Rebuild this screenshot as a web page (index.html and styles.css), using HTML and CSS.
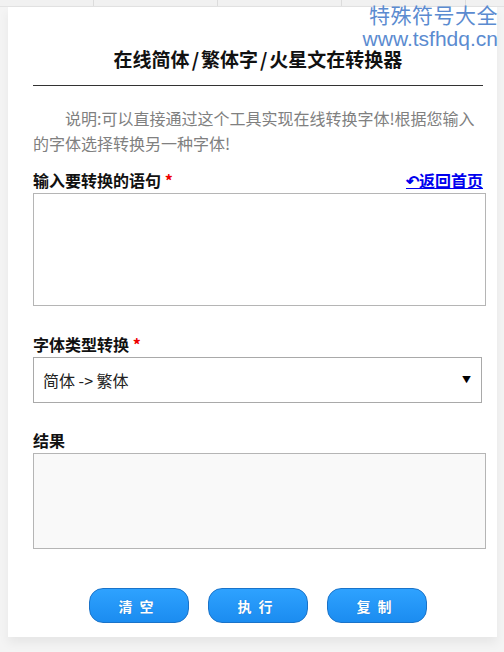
FILE: index.html
```html
<!DOCTYPE html>
<html lang="zh-CN">
<head>
<meta charset="UTF-8">
<meta name="viewport" content="width=device-width, initial-scale=1">
<title>在线简体/繁体字/火星文在转换器</title>
<link rel="stylesheet" href="styles.css">
</head>
<body>
<div class="top-tabs">
<span></span><span></span><span></span><span></span>
</div>
<div class="watermark">
<div class="wm-name">特殊符号大全</div>
<div class="wm-url">www.tsfhdq.cn</div>
</div>
<div class="card">
<h1 class="title">在线简体<i>/</i>繁体字<i>/</i>火星文在转换器</h1>
<hr class="rule">
<p class="intro">说明:可以直接通过这个工具实现在线转换字体!根据您输入的字体选择转换另一种字体!</p>

<div class="field-head">
<label for="source">输入要转换的语句 <em>*</em></label>
<a href="#" class="back-link">&#8630;返回首页</a>
</div>
<textarea id="source" class="box"></textarea>

<div class="field-head gap">
<label for="mode">字体类型转换 <em>*</em></label>
</div>
<div class="select-wrap">
<select id="mode">
<option>简体 -&gt; 繁体</option>
<option>繁体 -&gt; 简体</option>
<option>简体 -&gt; 火星文</option>
</select>
<span class="arrow">&#9660;</span>
</div>

<div class="field-head gap-sm">
<label for="result">结果</label>
</div>
<textarea id="result" class="box result" readonly></textarea>

<div class="actions">
<button class="btn">清空</button>
<button class="btn">执行</button>
<button class="btn">复制</button>
</div>
</div>
</body>
</html>
```

FILE: styles.css
```css
body {
  margin: 0;
  background: #f4f4f4;
  font-family: "Noto Sans CJK SC", "Liberation Sans", sans-serif;
  color: #111;
  height: 652px;
  overflow: hidden;
  position: relative;
}
.top-tabs {
  display: flex;
  height: 6px;
  border-bottom: 1px solid #e2e2e2;
  background: #f1f1f1;
}
.top-tabs span {
  width: 123px;
  border-right: 1px solid #dcdcdc;
}
.top-tabs span:first-child {
  width: 93px;
}
.watermark {
  position: absolute;
  top: 1px;
  right: 6px;
  color: #5b8bd0;
  text-align: right;
}
.wm-name {
  font-size: 21px;
  line-height: 26px;
  letter-spacing: 0.5px;
}
.wm-url {
  font-family: "Liberation Sans", sans-serif;
  font-size: 21px;
  line-height: 24px;
}
.card {
  background: #fff;
  margin: 0 7px 0 8px;
  padding: 40px 14px 14px 25px;
  box-shadow: 0 6px 10px rgba(0, 0, 0, 0.06);
}
.title {
  margin: 0;
  font-size: 19px;
  line-height: 24px;
  text-align: center;
  font-weight: bold;
}
.title i {
  font-style: normal;
  padding: 0 2px;
}
.rule {
  margin: 14px 0 0;
  border: 0;
  border-top: 1px solid #333;
}
.intro {
  margin: 20px 0 0;
  font-size: 16px;
  line-height: 25px;
  color: #808080;
  text-indent: 2em;
}
.field-head {
  display: flex;
  justify-content: space-between;
  align-items: center;
  margin-top: 12px;
  height: 24px;
  margin-bottom: 1px;
}
.field-head.gap {
  margin-top: 26px;
}
.field-head.gap-sm {
  margin-top: 25px;
}
.field-head label {
  font-size: 16px;
  font-weight: bold;
}
.field-head em {
  color: #e00;
  font-style: normal;
}
.back-link {
  color: #0000ee;
  font-size: 16px;
  font-weight: bold;
}
.box {
  display: block;
  box-sizing: border-box;
  width: 453px;
  height: 113px;
  border: 1px solid #b5b5b5;
  margin: 0;
  resize: none;
  font-family: inherit;
}
.box.result {
  height: 96px;
  background: #f9f9f9;
}
.select-wrap {
  position: relative;
  width: 449px;
}
.select-wrap select {
  display: block;
  width: 100%;
  height: 46px;
  box-sizing: border-box;
  border: 1px solid #a9a9a9;
  background: #fff;
  padding: 0 9px;
  font-family: inherit;
  font-size: 16px;
  color: #222;
  appearance: none;
  -webkit-appearance: none;
  border-radius: 0;
}
.arrow {
  position: absolute;
  right: 11px;
  top: 16px;
  font-size: 9px;
  color: #000;
}
.actions {
  display: flex;
  justify-content: center;
  gap: 19px;
  margin-top: 39px;
}
.btn {
  width: 100px;
  height: 35px;
  border: 1px solid #1a73c9;
  border-radius: 14px;
  background: linear-gradient(#2ea2ff, #1b8cf0);
  color: #fff;
  font-family: inherit;
  font-size: 14px;
  font-weight: bold;
  letter-spacing: 7px;
  padding-left: 7px;
  text-shadow: 0 0 1px rgba(0, 40, 120, 0.4);
  cursor: pointer;
}
```
